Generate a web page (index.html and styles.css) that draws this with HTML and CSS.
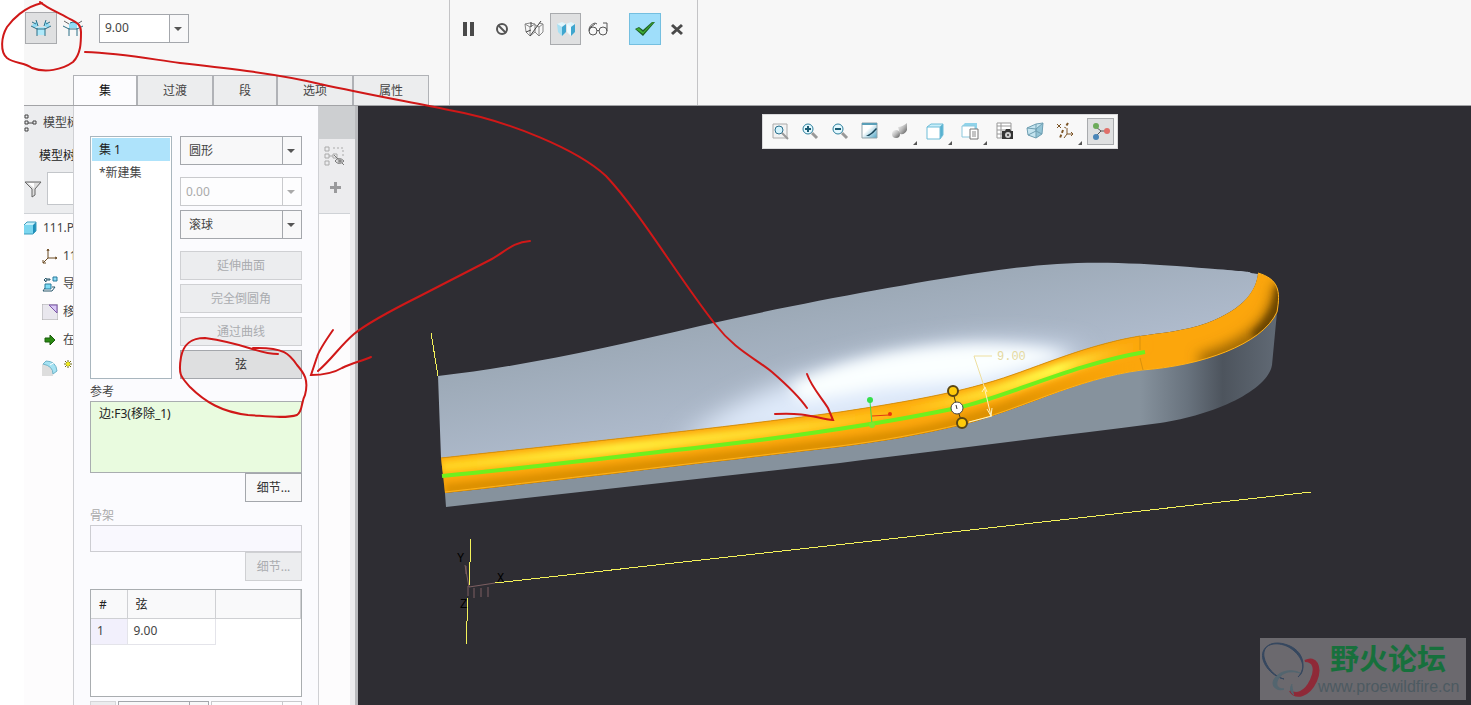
FILE: index.html
```
<!DOCTYPE html>
<html lang="zh-CN">
<head>
    <meta charset="UTF-8">
    <meta name="viewport" content="width=device-width, initial-scale=1.0">
    <title>倒圆角</title>
    <link rel="stylesheet" href="styles.css">
</head>
<body>
    <div class="app">
        <header class="ribbon">
            <div class="dashboard">
                <div class="tools">
                    <button class="icon-btn pressed" aria-label="集模式">
                        <svg width="22" height="20" viewBox="0 0 22 20" fill="none" stroke="#2a6f86">
                            <path d="M7 9h8v8H7z" fill="#aee9fa" stroke="none"/>
                            <path d="M2 7l5-4 1 5-4 2zM20 7l-5-4-1 5 4 2z" fill="#8fdcf5" stroke="none"/>
                            <path d="M7 18v-8M15 18v-8M7 11h8M1 8l6 3M21 8l-6 3M6 2l2 6M16 2l-2 6M2 4l4 2M20 4l-4 2"/>
                        </svg>
                    </button>
                    <button class="icon-btn" aria-label="过渡模式">
                        <svg width="22" height="20" viewBox="0 0 22 20" fill="none" stroke="#2a6f86">
                            <path d="M7 10V6q4-4 8 0v4z" fill="#8fdcf5" stroke="none"/>
                            <path d="M7 18v-8M15 18v-8M7 11h8M1 8l6 3M21 8l-6 3M8 5q3-2 6 0"/>
                            <path d="M2 3l5 3M20 3l-5 3" stroke="#666"/>
                        </svg>
                    </button>
                    <div class="combo radius">
                        <input type="text" value="9.00" aria-label="半径">
                        <button class="combo-arrow" aria-label="展开"></button>
                    </div>
                </div>
                <nav class="tabs">
                    <button class="tab active">集</button>
                    <button class="tab">过渡</button>
                    <button class="tab">段</button>
                    <button class="tab">选项</button>
                    <button class="tab">属性</button>
                </nav>
            </div>
            <div class="actions">
                <button class="icon-btn" aria-label="暂停">
                    <svg width="20" height="20" viewBox="0 0 20 20"><path d="M3 3h4v14H3zM10 3h4v14h-4z" fill="#4a4a4a"/></svg>
                </button>
                <button class="icon-btn" aria-label="无预览">
                    <svg width="20" height="20" viewBox="0 0 20 20" fill="none" stroke="#555" stroke-width="2"><circle cx="10" cy="10" r="5"/><path d="M6 6l8 8"/></svg>
                </button>
                <button class="icon-btn" aria-label="分离">
                    <svg width="20" height="20" viewBox="0 0 20 20" fill="none" stroke="#888" stroke-width="1">
                        <path d="M1 5l5 3 5-3-5-1zM1 5l1 8 4 4V8M11 5v8l-5 4M11 6l4 2 4-3-4-1M15 8v9l-4-4M19 5v8l-4 4"/>
                        <path d="M6 17L17 2M2 13l5-2M7 3v5" stroke="#444"/>
                    </svg>
                </button>
                <button class="icon-btn pressed" aria-label="连接">
                    <svg width="20" height="20" viewBox="0 0 20 20">
                        <path d="M1 5l5-2 4 2-4 3z" fill="#dff6fd"/><path d="M1 5l5 3v9l-4-4z" fill="#a8e0f3"/><path d="M6 8l4-3v8l-4 4z" fill="#3fa6cf"/>
                        <path d="M10 5l5-2 4 2-4 3z" fill="#dff6fd"/><path d="M11 5l4 3v9l-4-4z" fill="#eefbff"/><path d="M15 8l4-3v8l-4 4z" fill="#3fa6cf"/>
                    </svg>
                </button>
                <button class="icon-btn" aria-label="特征预览">
                    <svg width="22" height="20" viewBox="0 0 22 20" fill="none" stroke="#555" stroke-width="1">
                        <circle cx="7" cy="12" r="4"/><circle cx="17" cy="12" r="4"/><path d="M11 12q1-2 2 0M3 11q0-5 6-7l2 1M21 12V4l-4 0M3 12q0-4 6-7"/>
                    </svg>
                </button>
                <button class="icon-btn confirm" aria-label="确定">
                    <svg width="22" height="20" viewBox="0 0 22 20"><path d="M1 10l4-2 4 3 9-8h3L9 17z" fill="#1d5e22"/><path d="M2 10l3-1 4 4L19 3h1L9 15z" fill="#3fae34"/></svg>
                </button>
                <button class="icon-btn" aria-label="取消">
                    <svg width="20" height="20" viewBox="0 0 20 20" fill="none" stroke="#4a4a4a" stroke-width="3"><path d="M5 6l10 9M15 6L5 15"/></svg>
                </button>
            </div>
        </header>

        <main class="workspace">
            <aside class="tree">
                <div class="tree-head">
                    <div class="tree-tab">
                        <svg width="14" height="18" viewBox="0 0 14 18" fill="none" stroke="#444"><path d="M1 1h3v3H1zM1 7h3v3H1zM1 14h3v3H1zM9 7h3v3H9zM4 9h5"/></svg>
                        <span>模型树</span>
                    </div>
                    <div class="tree-title">模型树</div>
                    <div class="tree-filter">
                        <svg width="18" height="18" viewBox="0 0 18 18"><path d="M1 2h16l-6 7v6l-3 2V9z" fill="#ddd" stroke="#666"/><path d="M4 3h6v5z" fill="#fff"/></svg>
                        <input type="text" aria-label="筛选">
                    </div>
                </div>
                <ul class="tree-list">
                    <li class="root">
                        <svg width="15" height="16" viewBox="0 0 15 16"><path d="M0 5l3-3h9l-3 3z" fill="#c8f1fb"/><path d="M0 5h9v9H0z" fill="#7bd6ef"/><path d="M9 5l3-3v9l-3 3z" fill="#1f8fba"/><path d="M0 14h9l3-3V2H3L0 5" fill="none" stroke="#3f9dbd"/></svg>
                        <span>111.P</span>
                    </li>
                    <li>
                        <svg width="16" height="16" viewBox="0 0 16 16" fill="none" stroke="#6b4a22"><path d="M6 1v9h9M6 10l-5 5M5 3l1-2 1 2M13 9l2 1-2 1M1 12v3h3"/></svg>
                        <span>11</span>
                    </li>
                    <li>
                        <svg width="16" height="16" viewBox="0 0 16 16"><path d="M2 4l2-2v1h4v1H4v2zM3 12l-2 3h9l3-4h-3" fill="none" stroke="#27566b"/><path d="M3 8h6v5H3z" fill="#7fdcf5" stroke="#27799a"/><path d="M11 1h4v4h-4z" fill="#8fdcf5" stroke="#27799a"/></svg>
                        <span>导</span>
                    </li>
                    <li>
                        <svg width="16" height="16" viewBox="0 0 16 16"><path d="M0 0h16v16H0z" fill="#e9e7ee" stroke="#aaa"/><path d="M7 1h8v8z" fill="#d9c8f5" stroke="#7b55a8"/></svg>
                        <span>移</span>
                    </li>
                    <li>
                        <svg width="16" height="16" viewBox="0 0 16 16"><path d="M3 6h5V3l5 5-5 5v-3H3z" fill="#2a8a12" stroke="#1a5c0c"/></svg>
                        <span>在</span>
                    </li>
                    <li>
                        <svg width="16" height="16" viewBox="0 0 16 16"><path d="M0 4h7l4 4v8H0z" fill="#ddd"/><path d="M4 1q10 0 11 10l-4 3Q11 6 1 4z" fill="#a5e2f3" stroke="#6fb3c8"/><path d="M8 5l5-3" stroke="#fff"/></svg>
                        <svg width="10" height="16" viewBox="0 0 10 16"><path d="M5 0v8M1 4h8M2 1l6 6M8 1L2 7" stroke="#6d6a10"/><circle cx="5" cy="4" r="2" fill="#f2ee1c"/></svg>
                    </li>
                </ul>
            </aside>

            <section class="panel">
                <div class="set-row">
                    <ul class="set-list">
                        <li class="selected">集 1</li>
                        <li>*新建集</li>
                    </ul>
                    <div class="set-options">
                        <div class="combo">
                            <select aria-label="截面形状"><option>圆形</option></select>
                        </div>
                        <div class="combo disabled spaced">
                            <select aria-label="圆锥参数" disabled><option>0.00</option></select>
                        </div>
                        <div class="combo">
                            <select aria-label="创建方法"><option>滚球</option></select>
                        </div>
                        <button class="btn spaced" disabled>延伸曲面</button>
                        <button class="btn" disabled>完全倒圆角</button>
                        <button class="btn" disabled>通过曲线</button>
                        <button class="btn on">弦</button>
                    </div>
                </div>

                <h2 class="label">参考</h2>
                <div class="collector">边:F3(移除_1)</div>
                <button class="btn details">细节...</button>

                <h2 class="label off">骨架</h2>
                <div class="collector empty"></div>
                <button class="btn details" disabled>细节...</button>

                <div class="table-box">
                    <table class="radii">
                        <thead>
                            <tr><th class="num">#</th><th class="chord">弦</th><th></th></tr>
                        </thead>
                        <tbody>
                            <tr><td class="num">1</td><td class="chord">9.00</td><td class="rest"></td></tr>
                        </tbody>
                    </table>
                </div>

                <div class="value-row">
                    <span class="value-icon"></span>
                    <div class="combo"><select aria-label="值"></select></div>
                    <div class="combo disabled"><select aria-label="参考值" disabled></select></div>
                </div>
            </section>

            <aside class="tree-side">
                <div class="side-top"></div>
                <div class="side-tools">
                    <svg width="22" height="20" viewBox="0 0 22 20" fill="none" stroke="#aaa"><path d="M1 1h4v4H1zM1 8h4v4H1zM1 15h4v4H1zM5 10h4M9 8h4v4H9z"/><path d="M9 2h10v8" stroke-dasharray="2 2"/><path d="M11 15q4-5 9 0q-5 5-9 0M10 9l10 10" stroke="#777"/><circle cx="16" cy="15" r="2" fill="#888"/></svg>
                    <svg width="14" height="14" viewBox="0 0 14 14"><path d="M5 1h3v4h4v3H8v4H5V8H1V5h4z" fill="#9a9a9c"/></svg>
                </div>
                <div class="side-body"></div>
            </aside>

            <section class="viewport">
                <svg class="model" viewBox="358 106 1113 599" preserveAspectRatio="xMinYMin slice">
                    <defs>
                        <linearGradient id="top" gradientUnits="userSpaceOnUse" x1="760" y1="300" x2="785" y2="425">
                            <stop offset="0" stop-color="#9aa7b4"/><stop offset="1" stop-color="#b1bdcf"/>
                        </linearGradient>
                        <linearGradient id="side" gradientUnits="userSpaceOnUse" x1="1140" y1="0" x2="1278" y2="0">
                            <stop offset="0" stop-color="#86929d"/><stop offset="0.35" stop-color="#68727d"/><stop offset="0.6" stop-color="#4d545d"/><stop offset="1" stop-color="#616a75"/>
                        </linearGradient>
                        <linearGradient id="shine" gradientUnits="userSpaceOnUse" x1="441" y1="0" x2="1150" y2="0">
                            <stop offset="0" stop-color="#ffd21f"/><stop offset="0.25" stop-color="#ffec3a"/><stop offset="0.5" stop-color="#ffd428"/><stop offset="0.65" stop-color="#ffb40e"/><stop offset="0.74" stop-color="#ffd428"/><stop offset="0.87" stop-color="#fffa48"/><stop offset="1" stop-color="#ffae10" stop-opacity="0"/>
                        </linearGradient>
                        <linearGradient id="under" gradientUnits="userSpaceOnUse" x1="441" y1="0" x2="1150" y2="0">
                            <stop offset="0" stop-color="#dc9004"/><stop offset="0.8" stop-color="#dc9004"/><stop offset="1" stop-color="#fba50b" stop-opacity="0"/>
                        </linearGradient>
                        <filter id="soft" x="-30%" y="-60%" width="160%" height="220%"><feGaussianBlur stdDeviation="12"/></filter>
                        <filter id="soft-m" x="-30%" y="-60%" width="160%" height="220%"><feGaussianBlur stdDeviation="7"/></filter>
                        <filter id="soft-s" x="-30%" y="-60%" width="160%" height="220%"><feGaussianBlur stdDeviation="3"/></filter>
                        <clipPath id="face">
                            <path d="M438 376C520 367 610 347 700 326S900 285 978 273S1100 260 1190 267S1235 271 1258 274C1256 290 1246 308 1207 323C1185 331 1160 333 1140 336C1080 346 1030 371 987 383C950 394 900 403 840 412C720 428 580 443 441 458Z"/>
                        </clipPath>
                        <clipPath id="round">
                            <path d="M1258 273C1256 290 1246 308 1207 323C1185 331 1160 333 1140 336C1080 346 1030 371 987 383C950 394 900 403 840 412C720 428 580 443 441 458L445 493C580 478 720 461 840 447C880 442 920 435 962 425C1020 411 1075 379 1142 370C1200 366 1262 345 1277 312C1281 290 1278 279 1258 273Z"/>
                        </clipPath>
                    </defs>

                    <!-- side wall -->
                    <path d="M445 493C580 478 720 461 840 447C880 442 920 435 962 425C1020 411 1075 379 1142 370C1200 366 1262 345 1277 312L1272 365C1268 390 1215 415 1160 423C1050 437 950 449 840 463L446 507Z" fill="url(#side)"/>

                    <!-- top face -->
                    <g clip-path="url(#face)">
                        <path d="M430 250h860v230H430z" fill="url(#top)"/>
                        <path d="M680 445C730 395 830 360 950 345C1010 340 1060 345 1085 352L1000 400L840 430Z" fill="#dfeafa" filter="url(#soft)"/>
                        <path d="M790 385C840 362 900 348 970 345C1010 344 1050 350 1070 356L980 378L880 388L800 402Z" fill="#fbffff" filter="url(#soft-m)"/>
                    </g>

                    <!-- round -->
                    <g clip-path="url(#round)">
                        <path d="M430 260h860v240H430z" fill="#fca60c"/>
                        <path d="M445 490C580 475 720 458 840 444C920 434 950 427 1000 410C1050 392 1090 376 1142 367" fill="none" stroke="url(#under)" stroke-width="12" filter="url(#soft-s)"/>
                        <path d="M441 467C580 453 720 438 840 422C900 413 950 403 990 392C1040 377 1080 357 1150 345" fill="none" stroke="url(#shine)" stroke-width="12" filter="url(#soft-s)"/>
                        <path d="M1200 362Q1280 340 1281 284" fill="none" stroke="#8a5a04" stroke-width="14" filter="url(#soft-m)"/>
                        <path d="M1255 338Q1281 315 1282 286" fill="none" stroke="#6b4500" stroke-width="12" filter="url(#soft-s)"/>
                    </g>
                    <path d="M445 492C580 477 720 460 840 446C880 441 920 434 962 424C1020 410 1075 379 1142 370C1200 366 1262 345 1277 312C1281 290 1278 279 1258 273" fill="none" stroke="#ffb21c"/>
                    <path d="M441 458C580 443 720 428 840 412C900 403 950 394 987 383C1030 371 1080 346 1140 336V350M1140 358l3 12" fill="none" stroke="#d9920c"/>
                    <path d="M442 476C530 468 620 456 703 447C790 437 880 424 957 408C1010 396 1070 365 1145 352" fill="none" stroke="#6ff01e" stroke-width="4"/>

                    <!-- drag handles and radius dimension -->
                    <path d="M953 392l4 16 5 15" stroke="#4d3a10" fill="none"/>
                    <circle cx="953" cy="391" r="5" fill="#ffcb0a" stroke="#5a4613" stroke-width="2"/>
                    <circle cx="957" cy="408" r="6" fill="#fff" stroke="#444"/>
                    <path d="M956 405l1 4" stroke="#333"/>
                    <circle cx="962" cy="423" r="5" fill="#ffcb0a" stroke="#5a4613" stroke-width="2"/>
                    <path d="M992 356H974l10 30" fill="none" stroke="#eedfa0"/>
                    <path d="M984 386l7 30M982 392l3-5 2 5M987 409l4 7 1-8M969 422l23-6" fill="none" stroke="#fff3c0"/>
                    <text class="dim" x="997" y="360">9.00</text>
                    <path d="M870 402l2 22" stroke="#3fe04a"/>
                    <circle cx="870" cy="400" r="3" fill="#35e04a"/><circle cx="872" cy="425" r="3" fill="#7be830"/>
                    <path d="M872 416l17-1" stroke="#e23a12"/><circle cx="890" cy="414" r="2" fill="#e8350f"/>

                    <!-- datum axes -->
                    <path d="M431 333l7 43M471 539l-2 47M468 598l-2 47M495 583L1311 492" fill="none" stroke="#f4f25a" shape-rendering="crispEdges"/>
                    <path d="M469 587l26-4M469 587l-4-22M466 566v8M474 588v10M481 588v9M488 587v10M468 586v10" stroke="#7d5f62" fill="none"/>
                    <g class="axis">
                        <text x="457" y="562">Y</text><text x="497" y="582">X</text><text x="460" y="608">Z</text>
                    </g>
                </svg>

                <div class="view-bar">
                    <button aria-label="重新调整"><svg viewBox="0 0 20 20"><path d="M3 2h14v14H3z" fill="#f2f2f2" stroke="#aaa"/><circle cx="9" cy="8" r="4" fill="#d5f3fc" stroke="#2a6f8c"/><path d="M12 11l6 6" stroke="#999" stroke-width="2"/></svg></button>
                    <button aria-label="放大"><svg viewBox="0 0 20 20"><circle cx="8" cy="7" r="5" fill="#e4f8fe" stroke="#2a7f9c"/><path d="M5 7h6M8 4v6" stroke="#1b5c74" stroke-width="2"/><path d="M12 11l5 5" stroke="#999" stroke-width="3"/></svg></button>
                    <button aria-label="缩小"><svg viewBox="0 0 20 20"><circle cx="8" cy="7" r="5" fill="#e4f8fe" stroke="#2a7f9c"/><path d="M5 7h6" stroke="#1b5c74" stroke-width="2"/><path d="M12 11l5 5" stroke="#999" stroke-width="3"/></svg></button>
                    <button aria-label="重画"><svg viewBox="0 0 20 20"><defs><linearGradient id="paint" x1="0" y1="0" x2="1" y2="1"><stop offset="0.4" stop-color="#fff"/><stop offset="1" stop-color="#4ea5c6"/></linearGradient></defs><path d="M2 1h15v15H2z" fill="url(#paint)" stroke="#93a3aa"/><path d="M2 1h15v2H2z" fill="#5a9fb8"/><path d="M6 14q6-3 10-8l1 1q-4 5-8 7z" fill="#17455a"/></svg></button>
                    <button class="more" aria-label="渲染选项"><svg viewBox="0 0 20 20"><defs><linearGradient id="metal" x1="0" y1="0" x2="1" y2="1"><stop offset="0" stop-color="#fff"/><stop offset="0.5" stop-color="#bbb"/><stop offset="1" stop-color="#555"/></linearGradient></defs><path d="M8 5q4 0 9-4v7q-2 5-7 4z" fill="url(#metal)"/><circle cx="6" cy="12" r="4" fill="url(#metal)"/></svg></button>
                    <button class="more" aria-label="显示样式"><svg viewBox="0 0 20 20"><path d="M2 5l4-3h12l-3 3z" fill="#c9eef9"/><path d="M15 5l3-3v11l-3 4z" fill="#58b1d0"/><path d="M2 5h13v12H2z" fill="#fff"/><path d="M2 5h13v12H2zM2 5l4-3h12v11l-3 4M15 5l3-3" fill="none" stroke="#6fbdd8"/></svg></button>
                    <button class="more" aria-label="已保存方向"><svg viewBox="0 0 20 20"><path d="M2 4l3-3h12l-2 3zM15 4l2-3v6h-2z" fill="#8fd3ea"/><path d="M2 4h13v11H2z" fill="#fff" stroke="#8cc8dd"/><path d="M10 7h8v10h-8z" fill="#fff" stroke="#777"/><path d="M12 10h4M12 12h4M12 14h4" stroke="#888"/></svg></button>
                    <button aria-label="视图管理器"><svg viewBox="0 0 20 20"><path d="M2 1h14v15H2zM2 4h14M2 8h14M2 12h8M6 1v15" fill="#fff" stroke="#999"/><path d="M7 9h3l1-2h4l1 2h2v8H7z" fill="#333"/><circle cx="13" cy="13" r="3" fill="#ccc"/><circle cx="13" cy="13" r="1" fill="#333"/></svg></button>
                    <button aria-label="透视图"><svg viewBox="0 0 20 20"><path d="M2 6l9-4 7-1-1 11-6 4-8-3z" fill="#c4e4ef"/><path d="M11 7l7-6-1 11-6 4z" fill="#93c4d6"/><path d="M2 6l9 1 7-6-7 1zM2 6l1 7 8 3V7M18 1l-1 11-6 4M11 2v7l-8 4M11 9l6 3" fill="none" stroke="#6f9fb2"/></svg></button>
                    <button class="more" aria-label="基准显示过滤器"><svg viewBox="0 0 20 20" fill="none" stroke="#7c5526"><path d="M2 2l4 4M6 2L2 6"/><path d="M13 1l-3 5M8 8l-3 8" stroke-width="2" stroke-dasharray="3 2"/><path d="M12 6v6h6M12 12l-3 4M16 10l2 2-2 2"/></svg></button>
                    <button class="pressed" aria-label="旋转中心"><svg viewBox="0 0 20 20"><path d="M5 5l5 4h6M10 9l-5 5" fill="none" stroke="#555"/><circle cx="5" cy="4" r="3" fill="#6cab5a"/><circle cx="16" cy="9" r="3" fill="#e0706a"/><circle cx="5" cy="15" r="3" fill="#4a86b8"/></svg></button>
                </div>

                <div class="watermark">
                    <svg width="60" height="60" viewBox="0 0 60 60">
                        <path d="M36 38C44 30 43 14 28 7C12 0 0 6 2 18C4 28 13 38 22 40C8 37-2 22 1 13C4 3 20 2 31 11C42 20 44 32 36 38Z" fill="#35475f" stroke="#35475f"/>
                        <path d="M43 22C54 16 60 28 54 42C47 57 34 61 28 52C34 56 43 54 49 41C54 30 52 22 43 22Z" fill="#8f2a38" stroke="#8f2a38" stroke-width="2"/>
                        <path d="M38 34C26 28 12 35 11 44C11 50 18 52 22 50C10 50 14 36 26 33Q32 32 38 34ZM30 45Q26 52 32 56" fill="#53656f" stroke="#53656f"/>
                    </svg>
                    <div class="watermark-text">
                        <strong>野火论坛</strong>
                        <span>www.proewildfire.cn</span>
                    </div>
                </div>
            </section>
        </main>

        <!-- red pen marks over the whole window -->
        <svg class="marks" width="1471" height="705" viewBox="0 0 1471 705">
            <path d="M42 3C24 7 12 20 7 27C1 37 0 52 7 58C15 64 24 62 32 68C45 73 62 70 73 62C81 54 81 42 81 32C81 23 75 22 68 18C58 12 48 9 40 2"/>
            <path d="M85 52C120 53 150 59 180 63C225 68 280 74 320 84C365 94 410 102 449 110C510 121 578 150 606 176C640 212 680 280 715 324C735 350 755 358 772 372C787 385 798 395 807 408"/>
            <path d="M807 374C812 388 822 398 828 408L833 420C818 419 808 412 775 414"/>
            <path d="M530 241C512 242 504 253 490 260L420 296C390 311 365 325 354 334C340 346 332 359 318 371"/>
            <path d="M333 330C326 340 319 350 317 357L311 375C322 375 332 374 342 368C352 363 362 361 371 357"/>
            <path d="M278 354C258 354 248 344 205 338C188 338 183 347 181 357C178 375 181 377 190 387C205 402 222 412 248 415C265 416 285 419 297 415C303 411 301 402 305 395C309 380 304 373 297 365C290 355 285 347 253 348"/>
        </svg>
    </div>
</body>
</html>
```
FILE: styles.css
```
* {
    box-sizing: border-box;
}
body {
    margin: 0;
    font-family: "Noto Sans", "Noto Sans CJK SC", sans-serif;
    font-size: 12px;
    line-height: 18px;
    color: #444;
    background-color: #fff;
}
button, input, select {
    font: inherit;
    color: inherit;
    margin: 0;
    padding: 0;
    border: none;
    border-radius: 0;
    background: none;
}
ul {
    list-style: none;
    margin: 0;
    padding: 0;
}
svg {
    display: block;
    flex-shrink: 0;
}
.app {
    position: relative;
    display: flex;
    flex-direction: column;
    height: 100vh;
    padding-left: 24px;
    overflow: hidden;
}

/* ribbon */
.ribbon {
    display: flex;
    flex-shrink: 0;
    background-color: #f7f7f7;
    border-bottom: 1px solid #a2a3a6;
}
.dashboard {
    display: flex;
    flex-direction: column;
    justify-content: space-between;
    width: 426px;
    border-right: 1px solid #c4c4c6;
}
.tools {
    display: flex;
    align-items: center;
    height: 56px;
    padding-left: 1px;
}
.icon-btn {
    display: flex;
    align-items: center;
    justify-content: center;
    width: 32px;
    height: 32px;
}
.pressed {
    background-color: #dfe0e1;
    border: 1px solid #a9abae;
}
.radius {
    width: 90px;
    margin-left: 10px;
}
.tabs {
    display: flex;
    height: 30px;
    margin: 19px 0 0 49px;
}
.tab {
    padding: 0 25px;
    border: 1px solid #b0b2b6;
    border-bottom: none;
    background-color: #ecedee;
}
.tab.active {
    background-color: #fcfcfe;
    color: #111;
}
.actions {
    display: flex;
    align-items: flex-start;
    width: 248px;
    padding: 13px 4px;
    border-right: 1px solid #c4c4c6;
}
.confirm {
    margin-left: 16px;
    background-color: #9fdefa;
    border: 1px solid #74bfe0;
}

/* drop-downs */
.combo {
    position: relative;
    display: flex;
    height: 29px;
    border: 1px solid #a4a7ac;
    background-color: #f8f8f9;
}
.combo select {
    flex: 1;
    min-width: 0;
    padding: 0 8px;
    appearance: none;
}
.combo input {
    flex: 1;
    min-width: 0;
    padding: 0 5px;
    background-color: #fff;
}
.combo-arrow {
    width: 18px;
}
.combo::before {
    content: "";
    position: absolute;
    top: 0;
    right: 18px;
    height: 100%;
    border-left: 1px solid #a4a7ac;
    pointer-events: none;
}
.combo::after {
    content: "";
    position: absolute;
    top: 12px;
    right: 6px;
    border: 4px solid transparent;
    border-top-color: #555;
    border-bottom: none;
    pointer-events: none;
}
.combo.disabled, .combo.disabled::before {
    border-color: #c9cacd;
}
.combo.disabled::after {
    border-top-color: #aaa;
}
.combo.disabled select {
    padding: 0 5px;
    color: #aaa;
    opacity: 1;
    background-color: #fdfdfe;
}

/* model tree */
.workspace {
    display: flex;
    flex: 1;
    min-height: 0;
}
.tree {
    width: 49px;
    overflow: hidden;
    white-space: nowrap;
    background-color: #fdfcfd;
}
.tree-head {
    height: 108px;
    background-color: #ecedef;
    border-bottom: 1px solid #cfd2d6;
}
.tree-tab {
    display: flex;
    align-items: center;
    gap: 5px;
    height: 33px;
}
.tree-title {
    padding-left: 15px;
    line-height: 33px;
    color: #222;
}
.tree-filter {
    display: flex;
    align-items: center;
    gap: 5px;
}
.tree-filter input {
    width: 120px;
    height: 33px;
    border: 1px solid #c3c6ca;
    background-color: #fff;
}
.tree-list li {
    display: flex;
    align-items: center;
    gap: 5px;
    height: 28px;
    padding-left: 18px;
}
.tree-list .root {
    gap: 4px;
    padding-left: 0;
}

/* sets panel */
.panel {
    flex-shrink: 0;
    width: 246px;
    padding: 30px 16px 0;
    border: 1px solid #cfd0d4;
    border-width: 0 1px;
    background-color: #fbfbfe;
    overflow: hidden;
}
.set-row {
    display: flex;
    gap: 8px;
}
.set-list {
    width: 82px;
    padding: 1px;
    border: 1px solid #a9b6be;
    background-color: #fff;
}
.set-list li {
    padding: 0 7px;
    line-height: 23px;
}
.set-list .selected {
    background-color: #aee3fb;
    color: #222;
}
.set-options {
    display: flex;
    flex: 1;
    flex-direction: column;
    gap: 4px;
}
.spaced {
    margin-top: 8px;
}
.btn {
    height: 29px;
    border: 1px solid #a4a7ac;
    background-color: #f8f8f9;
    color: #333;
}
.btn:disabled {
    border-color: #cfd0d3;
    background-color: #ecedef;
    color: #aaacb0;
}
.btn.on {
    background-color: #dedfe0;
}
.label {
    margin: 4px 0 0;
    font-size: 12px;
    font-weight: normal;
}
.label.off {
    margin-top: 5px;
    color: #aaa;
}
.collector {
    height: 72px;
    padding: 3px 8px;
    border: 1px solid #a9adb0;
    background-color: #e9fbdf;
    color: #222;
}
.collector.empty {
    height: 27px;
    border-color: #cdcdd2;
    background-color: #f9f8fe;
}
.details {
    display: block;
    width: 57px;
    margin-left: auto;
}
.table-box {
    height: 108px;
    margin-top: 8px;
    border: 1px solid #a9adb0;
    background-color: #fff;
}
.radii {
    width: 100%;
    border-collapse: collapse;
    table-layout: fixed;
}
.radii th {
    height: 28px;
    padding: 2px 8px 0;
    border: 1px solid #cfd0d3;
    border-width: 0 1px 1px 0;
    background-color: #f9f9fa;
    color: #222;
    font-weight: normal;
    text-align: left;
}
.radii td {
    height: 26px;
    padding: 0 6px;
    border: 1px solid #e4e4ea;
    border-width: 0 1px 1px 0;
}
.radii td.num {
    background-color: #f2f0fc;
}
.radii td.rest {
    border: none;
}
.num {
    width: 36px;
}
.chord {
    width: 88px;
}
.value-row {
    display: flex;
    gap: 2px;
    margin-top: 4px;
}
.value-row .combo {
    width: 91px;
}
.value-icon {
    width: 26px;
    height: 29px;
    border: 1px solid #d5d6d9;
    background-color: #ecedef;
}

/* right edge of the tree */
.tree-side {
    display: flex;
    flex-direction: column;
    flex-shrink: 0;
    width: 39px;
    border-right: 3px solid #b9babd;
    background-color: #ececee;
}
.side-top {
    height: 33px;
    background-color: #cdcfd1;
}
.side-tools {
    display: flex;
    flex-direction: column;
    gap: 15px;
    height: 74px;
    padding: 7px 5px;
}
.side-tools svg + svg {
    margin-left: 5px;
}
.side-body {
    flex: 1;
    margin-right: 5px;
    border-top: 1px solid #cfd2d6;
    background-color: #fdfcfd;
}

/* graphics area */
.viewport {
    position: relative;
    flex: 1;
    min-width: 0;
    background-color: #2e2d33;
}
.model {
    width: 100%;
    height: 100%;
}
.dim, .axis {
    font-family: "Liberation Mono", monospace;
    font-size: 12px;
    fill: #000;
}
.dim {
    fill: #e5d9a0;
}
.view-bar {
    position: absolute;
    top: 8px;
    right: 353px;
    display: flex;
    align-items: center;
    height: 35px;
    padding: 0 3px 0 2px;
    border: 1px solid #d9d9db;
    background-color: #f8f8f8;
}
.view-bar button {
    position: relative;
    width: 30px;
    height: 27px;
    padding-left: 5px;
}
.view-bar svg {
    width: 20px;
    height: 20px;
}
.view-bar .more {
    width: 35px;
}
.view-bar .more::after {
    content: "";
    position: absolute;
    right: 3px;
    bottom: 0;
    border: 2px solid #555;
    border-top-color: transparent;
    border-left-color: transparent;
}
.view-bar .pressed {
    width: 27px;
    margin-left: 2px;
    padding-left: 3px;
}
.watermark {
    position: absolute;
    right: 5px;
    bottom: 5px;
    display: flex;
    align-items: center;
    width: 206px;
    height: 62px;
    padding-left: 2px;
    background-color: #6b696e;
}
.watermark-text {
    display: flex;
    flex-direction: column;
    margin-left: -4px;
    white-space: nowrap;
}
.watermark strong {
    padding-left: 12px;
    font-size: 29px;
    line-height: 36px;
    color: #17703c;
}
.watermark span {
    font-family: "Liberation Sans", Arial, sans-serif;
    font-size: 16px;
    line-height: 20px;
    color: #4d5a61;
}

.marks {
    position: absolute;
    top: 0;
    left: 0;
    fill: none;
    stroke: #d01818;
    stroke-width: 2;
    stroke-linecap: round;
    pointer-events: none;
}
```
